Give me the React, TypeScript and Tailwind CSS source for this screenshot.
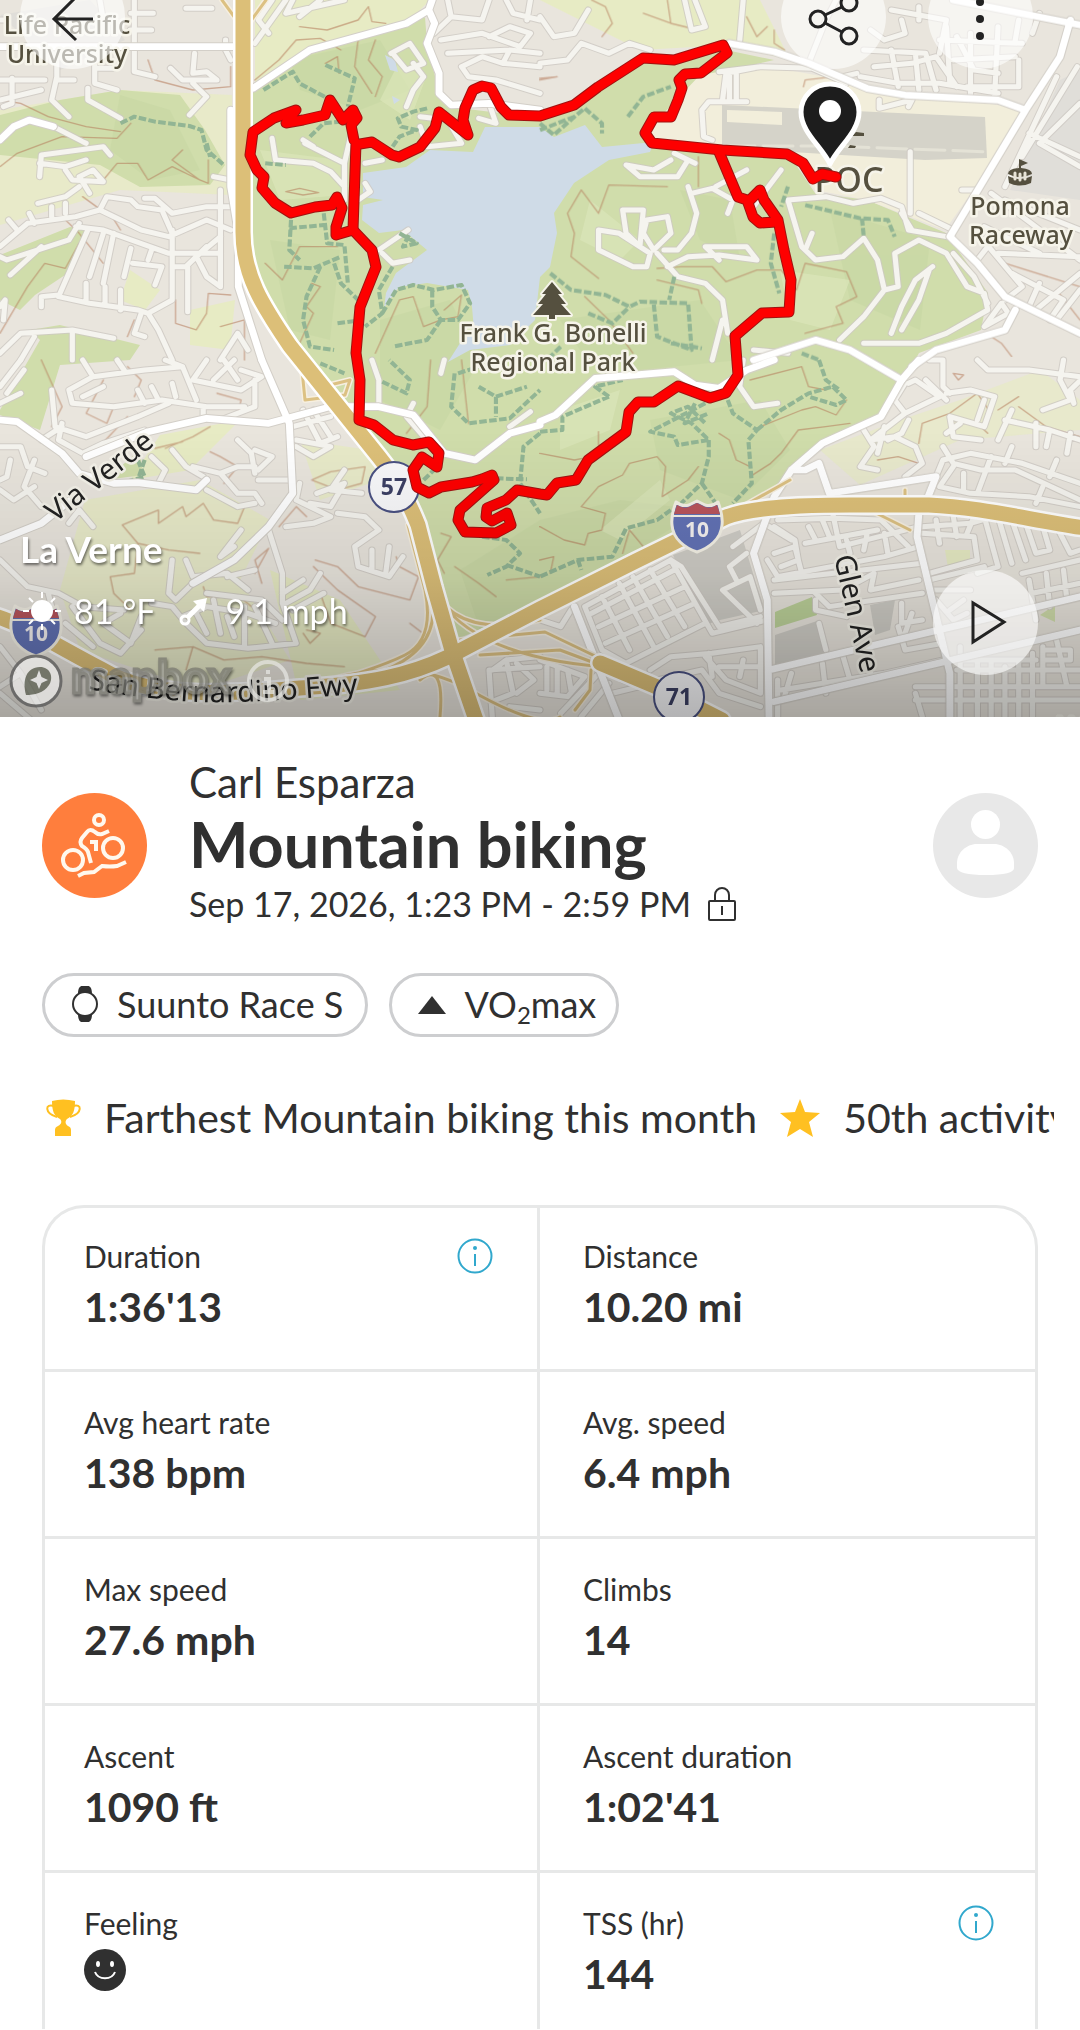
import type { ReactNode } from 'react'

const ROUTE =
  'M836 177L822 174L813 179L803 163L787 154L722 150L652 143L645 133L654 117L671 117L678 100L682 88L679 80L685 74L701 73L727 53L723 45L674 60L643 58L598 87L574 105L540 116L509 115L501 107L491 88L482 86L473 90L465 108L463 120L468 135L439 112L435 128L420 147L399 157L392 155L372 142L360 144'
const ROUTE_WEST =
  'M356 143L353 230L336 235L336 227L342 208L337 197L332 205L315 207L291 213L275 203L262 188L264 177L257 170L250 155L253 132L274 118L296 110L286 123L303 120L325 115L330 100L343 120L353 110L357 118L351 125L354 140'
const ROUTE_SOUTH =
  'M353 230L372 250L376 267L360 307L356 353L360 380L359 420L374 425L393 440L413 445L429 442L439 453L437 467L422 457L413 470L417 487L429 493L441 487L472 482L482 479L492 475L494 480L460 510L458 520L465 532L496 533L511 525L507 513L492 521L486 517L487 508L506 500L517 490L540 494L547 495L557 483L576 480L588 460L626 432L629 412L638 402L654 402L678 386L710 398L726 393L738 375L735 336L762 313L789 312L791 280L784 250L778 220L764 200L760 190L748 202'
const ROUTE_EAST = 'M719 152L738 197L747 200L753 217L760 223L776 222'

// Street data is stored per quadrant, each on its own 1568x1080 grid
const STREETS = {
  nw: 'M540 25H615M380 40H445M378 90H440M390 0V215L450 230M0 60H20M290 0L300 60M165 160V230L150 300L200 350M275 150V250L340 270M0 240H130M165 240H215M275 205H330M35 235V310L10 320M120 270L0 300M255 265V300L350 355M495 205L530 240L630 240L600 215L560 220L565 160M560 250L600 290L550 345M655 120V150L670 180M740 130L830 0M780 100L750 60L790 0M850 0L830 40L1000 0M870 50L930 0M115 530L120 465L300 440L320 465M115 490L190 500L250 480M190 510L210 540L300 545L270 510L230 530L260 580M250 430L240 425L155 380M230 560L190 590L110 610M0 740L80 670L220 650L290 630L410 690L490 710L600 660L670 690M290 630L310 590L380 600L400 620L470 630L500 700M420 595H450L500 640L600 620H670M640 570V860L600 830L570 770L640 710M150 620V650M190 610V640M85 640L100 670M25 660L50 690M0 770L20 780L200 720L230 670M30 825L120 740M220 680L300 690L490 760H640M255 690L170 890L260 910L400 930L430 940L500 900V690M300 700L260 830M330 700L300 850M380 745L360 830M385 790L470 800L450 855M430 780L440 750M500 800H540L600 740M545 800V935M250 850V900M305 860V910M350 870V930M120 920V890L170 885M410 940L390 1000L420 1010M430 940L460 990L500 1080M0 1060L60 1000L210 990L330 1015M210 990V1080M100 1010L60 1080M0 920L15 900L10 960M640 1080L690 1000L720 1050M620 530L670 540M790 415L800 480L910 490L960 515L1000 560M885 430L1000 490L1020 400M880 420L910 440M1000 490V600M1040 600L1075 575L1060 550M1060 490L1110 480M1100 750L1185 690M1110 760L1140 790L1190 780M1140 160L1180 210L1230 190L1190 130L1135 160M1180 320L1200 270L1230 230L1200 190M1260 100L1310 50L1400 60L1420 0M1310 50L1300 0M1280 120L1400 100L1510 140L1540 100L1480 80L1420 110M1340 200L1400 170L1460 190L1480 150M1460 190L1568 200M1340 200L1360 230L1440 240L1568 280M1470 0L1490 40L1568 60M1540 0L1530 60M1300 160L1480 150L1568 160M1220 350L1300 360L1340 430L1240 440L1220 380M1420 310L1440 370L1390 355',
  ne: 'M0 50L40 110L100 100L140 30M0 190L80 180L120 130L200 160L260 130L320 150M420 0L440 90L480 80L450 0M590 0L580 120M640 200L540 220L530 300M550 220V300M570 220V300M600 305H490L470 330L475 410L500 420M520 215L640 200L790 205L890 250M880 230L920 220M985 300V325L1080 300L1070 320M1075 455V640M1100 640L1200 690M1225 570H1270M380 480L330 510L250 495L290 530L400 530L430 480M390 460L450 490M430 560L455 640L440 700L400 750L360 750M440 580L500 565L560 600L545 640M510 560L600 510M240 630L300 630L290 740L250 700Z M310 660L370 650L380 700L330 750L300 700ZM170 690L230 700L320 760L310 800L270 800L170 750ZM370 800L430 770L520 765L630 780L600 740H480L520 780M340 760L400 830L480 850L530 900L545 1000M620 620L700 510M720 600L760 740L800 780L880 770L940 715L980 780L1000 870L1040 860L1030 760L1100 720L1180 760L1240 860L1290 880L1300 930L1180 1000L1100 1030L940 1030M720 600L830 590L910 610L990 595L1050 620L1070 690L1180 710M1050 640L1080 690M1140 800L1090 840L1050 920L1020 1000M1130 810L1100 900L1050 990M870 1020L940 950L1000 870M1200 760L1260 830L1300 910M790 700L770 750M860 0L830 60L780 190M1050 60L1060 100L1000 120L960 90M940 150L1120 160L1150 270M970 200L1080 190L1150 170L1210 260M930 230L1040 250H1160L1330 280M1020 150L1040 260M1090 160L1100 270M1180 80L1190 250M1210 110L1260 210L1330 220M1250 100V290M1330 80L1320 290M1160 120L1400 130M1200 180L1380 170M1240 260H1390V180M1020 30L1180 60L1160 160M1100 20V60M1430 100L1450 40M1390 60L1380 120M1560 200L1400 470M1500 230L1350 560M1568 310L1450 430L1568 500M1420 400L1568 470M1350 600L1568 690M1310 580L1568 780M1290 680L1450 760M1270 700L1400 860M1330 760L1568 770M1370 820L1520 900L1480 960M1400 860L1350 900M1450 850L1420 920M1300 740L1270 780M1500 960L1568 870M1440 930L1568 820M500 1080L530 960M620 1050L720 1060M1290 980L1340 910L1360 940Z',
  sw: 'M60 0L0 80M70 30L20 100M0 130L60 100M240 0L270 50L200 90L210 130L330 140L470 120L600 140H710M270 50L420 30L530 20L570 120M340 0L360 30M440 80L460 120M400 90L420 130M500 70L510 110M480 0L530 20M600 0L560 60L700 90L760 50L700 30M650 0L690 60M740 60V140L640 180M150 90L160 200L250 230L400 170L490 130M180 190L170 240L240 280L300 250L420 210M300 80L240 110M620 60L680 0M590 140L590 175M0 260H60L80 320L130 340M30 300L20 350L0 360M0 390L40 420L100 380M100 300L70 380L120 440M180 200L120 240M270 500L230 450L200 490M440 290L480 330L460 370M500 270L540 320L590 350M560 320L640 340L690 400H740L760 430M690 240L730 280L740 340M640 340L690 320H740M750 360H840M600 390L690 440L740 430M740 270L790 290L750 330M850 200L960 170M880 150L930 250L980 230M910 150L960 230M860 240L960 260L910 290L860 260M870 370L860 420L960 470L910 490L830 500M920 400L1000 370L960 440L900 430M1000 330L960 390L1050 400M980 460L1060 470L1100 510L1030 560L1040 620L1130 650L1170 590M1080 570V630M1130 560L1120 640M780 510L820 640V730L860 850L720 865L600 850L540 790L500 740L440 730M820 700L880 660M830 730L900 690L930 640M850 750L940 700M560 670L510 720L490 700L500 600M540 600L560 650L660 640L720 690M680 560L640 590L700 510M660 650L740 630M570 760L600 820M620 720L640 820M660 770L680 830M710 740V860M740 740L790 850M600 700L760 720L820 780M530 770L600 740L720 760L800 790M0 600L80 680L170 700L240 740L360 750M140 700L150 740M350 760L300 790L380 850L410 770M190 790L270 860M210 740L290 850L350 880L410 810M0 860L60 940L0 980M60 940L120 1050M0 1000L90 1080M1080 0L1100 60V130M1290 0L1280 40M1200 130L1180 170L1230 230M1480 200L1540 155M1470 900L1568 890M1430 930L1470 900L1490 1000L1440 1020M1500 910L1550 960L1500 1000M1430 1080L1420 930L1568 920M1480 1040L1568 1050',
  se: 'M590 0L580 80L620 140L690 130M1130 0H1170V80L1190 100M1270 0L1300 30L1420 30L1568 50M1520 0L1510 60L1540 120L1460 150M1570 60L1540 90L1550 130M1070 70L1090 60L1160 110L1060 160L960 240M1060 160L1030 120L1060 70M1120 60L1180 120M940 210L970 260L930 320L980 330M960 240L1030 230L1090 260L1110 310L1060 350M1000 200L980 280M1070 180L1050 220L1010 240M1180 100L1250 90L1320 110L1290 200L1190 170L1200 230L1280 240M1290 120L1270 180M1220 190L1180 220M1330 240L1370 150M1350 180L1480 210L1568 240M1440 190V260M1480 210L1470 260M1540 220L1530 280M1170 260L1200 310L1280 330H1380L1568 420M1150 350L1170 300L1250 280L1400 310L1568 370M1200 320L1160 380L1250 400L1420 410L1568 440M1310 290L1270 400M1370 260L1350 310M1230 340V390M1500 300L1480 350M1460 380L1440 430M850 460L870 560M690 480L850 475L990 480L1070 560M680 500L740 540L750 600L700 620M770 550L980 510M780 500L800 540M820 480L840 530M870 560L1100 500M660 600L690 650L1000 590L1100 560M760 640L740 560L680 580M680 660L1110 610M680 700L880 690L970 640L960 690L1100 660M800 700L840 740L1110 700M800 720V750L890 770M810 790L830 870M890 540L900 580M950 520L940 570M1000 520L1010 580M1110 500L1250 490L1350 460M1110 520L1260 530L1270 600L1130 640M1150 480L1160 550M1200 470L1210 530M1260 470L1240 520M1290 470L1330 620L1270 640M1330 470L1370 610M1370 480L1410 600M1410 490L1440 580L1480 570L1460 500M1500 500L1540 580L1568 570M1130 660L1290 620M1130 690H1250M1150 720L1200 780L1240 760M1190 750L1230 720M1400 640L1568 600M1420 660L1440 780M1470 640L1480 740M1520 630L1530 720M1430 700L1568 670M1050 730V790L1110 780M1040 800L1060 870L1170 850M1080 760L1060 820M690 960V1070M700 990L1000 940L1170 900M730 940L710 1010M820 910L830 1000M880 890L900 960M950 880L960 950M1090 980H1568M1090 1020H1568M1220 860V1070M1270 900V1070M1310 910V1070M1350 920V1070M1390 900V1070M1430 880V1070M1460 860V980M1500 840L1530 980M1210 930H1568M1230 900H1440M1470 870H1540V900H1470M1090 1000L1110 1070M130 740L380 600L500 820L660 780M130 740L180 870L250 910L480 790M150 760L390 630M170 800L420 680M190 850L450 730M180 710L260 870M230 670L330 860M270 650L370 830M320 630L420 800M380 600L410 620L520 800L640 770M320 930L380 890L500 880L640 860V1000L540 960L480 890M340 960L470 930L520 1000L640 1040M520 920L640 920M590 900L580 950M490 880L500 950M630 790L530 690L610 650L640 750M600 580L550 620L570 660M0 780L60 800L90 750M0 900L130 950L80 1010L0 1000M20 920V990M50 920V1000M80 930L90 990M240 960L290 980L210 1000M180 930L60 1060M200 970L120 1070M560 560L650 490L730 540',
}

const MAIN_ROADS = {
  nw: 'M0 140H680M735 265L900 150L1180 70L1245 30L1255 0M1245 30L1262 70L1240 130L1275 220V280L1310 315L1420 310L1568 330M0 420L40 380L85 360L155 380M670 330V560L692 700V860L760 1080',
  ne: 'M550 130L680 155L780 190L950 265L1060 285L1330 300L1410 330M1200 0L1568 75M1540 60L1510 170L1410 330L1190 710L1270 790L1350 890L1568 1000M1380 930L1350 990L1150 1050L1080 1100M620 1080L800 1020L900 1050L1050 1140',
  sw: 'M760 0L840 190L850 400L780 500L680 600L560 670M0 180L50 185L180 280L230 340L330 370L400 368L570 390L600 360M250 290L430 215L600 175L780 190L960 140L1100 140L1200 165L1290 280L1380 300L1480 220L1568 195M0 540L120 490L230 400',
  se: 'M0 185L45 165L160 55L390 35L450 75L520 85L600 30L680 0M1100 0L1050 60L990 170L820 250L730 330L680 410L620 580L660 720L665 1080M730 330L770 330L810 310L840 400L1150 350L1125 415M1100 460L1095 530L1190 940V1080M665 930L1568 710M680 1025L1568 810M100 740L230 1080',
}

const TRAILS = {
  nw: 'M350 370L390 350L450 365L550 378L585 390L600 450L650 495M600 430L610 470M765 270L850 215L870 250L960 300M945 195L1030 235L1010 320M900 410L940 370L990 365M770 490L830 495M1240 325L1200 335L1155 355L1165 380L1210 390L1160 410L1140 440M845 660L840 750L870 780M840 685L940 675M940 640L950 730L1000 735L1010 850M825 800L910 805L990 770M970 790L990 850L1040 900M930 800L890 890L880 960L900 1040L970 1050M1160 700L1210 730L1170 740L1190 700M1140 800L1100 870L1110 940L1060 980M1110 940L1150 870L1200 855L1260 870L1340 855L1365 910L1330 960L1280 960L1255 920V870M1280 960L1240 1020L1140 1040M980 970L1050 960',
  ne: 'M255 350L300 290L380 260M0 370L40 405L100 350L130 325L180 370V400M0 390L100 350M720 560L700 620M770 615L930 655L1010 660L1030 710M935 655L940 710M680 700L670 790L695 880M30 820L90 870L190 885L260 920L290 905L430 910L440 1050L340 1010L330 910M390 830L375 900M140 940L210 970L260 920M380 1030L470 1045M760 1060L810 1080M60 1040L20 1080',
  sw: 'M930 10L1000 40M1110 65L1180 100L1190 60L1130 0M1320 40L1310 140L1360 190L1480 175L1568 90M1330 40L1390 20M1390 80L1440 110L1530 80M1440 110V170M1568 220L1520 260L1510 370L1568 460M1440 355L1530 358M1400 530L1470 540L1510 580L1470 620L1415 645M1470 615L1568 650M1230 360L1260 330M420 300L400 360M400 300L420 350L350 370',
  se: 'M0 215L65 210V170L200 110M200 110L160 80L240 60M480 130L320 215L390 230L400 255L490 240L440 190L380 160L430 140L480 190M490 240V290L470 370L410 430M470 370L510 430M545 120L560 160L630 210L605 240L615 370L560 430M630 210L700 150L780 100L850 80L890 120L860 135L780 110M810 0L830 60L870 90M380 450L340 480L250 505L210 590L110 600L0 650M110 600L120 630M450 130L420 190L490 160',
}

const CONTOURS = {
  nw: 'M430 180L450 240L560 270L670 260M670 200V260M0 300L60 310L140 350L250 380L350 395M0 500L50 460L180 410L340 415L380 370M300 540L340 490L400 490L430 540L500 500L580 540L605 550V480M530 450L500 480L580 540M240 590L280 620L320 640L350 690M0 1000L80 860L130 790L190 805L230 730M740 240L810 180L860 120L930 115L990 150M870 80L950 90L1040 60L1070 20L1080 65L1120 70M1040 120L1030 200L1080 280M1090 120L1070 180L1110 230L1090 290M945 190L980 170L985 220M830 575L870 565L925 578L880 585ZM1290 930L1340 885L1330 950L1280 960L1230 980L1200 890L1160 900L1090 1060M770 790L820 840L870 740H980M905 850L930 860L890 920L910 940L870 1030M510 900V970L570 990L600 940L605 880L670 885M370 1010L390 960M640 980L710 960V1080M180 650L230 700L300 790',
  ne: 'M0 235L50 230L0 240M300 40L380 70L440 85M370 0L380 70M150 0L190 20L210 70L180 110M600 50L630 110L660 80M680 90V130L710 150M340 805L410 800L500 800L540 845L630 810L700 810L745 870L770 790L890 815L920 890L860 920L880 970L770 1000M170 640L120 570L80 640L100 700L90 770L170 835M170 640L200 555L370 560M460 470V560M130 890L200 960L270 1060M470 910L460 870L340 840M1350 790L1568 860M1310 1010L1340 1030L1370 1070M1500 870L1568 960M765 260L770 240L850 230',
  sw: 'M300 60L250 160L310 190L330 140M370 20L410 60L390 110M120 0L180 140L150 200M630 100L700 120L690 160M480 265L560 230L610 200M450 265L530 245M270 280L370 170M355 495L460 450L460 490L530 440L540 470L590 430L620 480L690 490L710 440M355 495L400 550L490 570L580 580M400 550L390 640L320 650L330 700L380 750M905 360L960 335L1060 320L1050 370L980 390ZM610 275L640 290L690 320L650 370M810 500L860 440L890 470M740 640L780 565L740 600L760 670M915 600L980 620L1040 680L1190 720L1215 650L1160 620L1150 590M910 620L980 690L1090 770L1060 830L960 790L930 700M880 820L900 850L930 820L890 810M590 680L600 710L690 705L730 740M450 870L560 860L650 900L760 890L890 910L1000 920M560 860L540 930M1250 0L1240 140L1180 220M1340 0L1360 190M1320 620L1390 670L1440 710M1470 660L1568 650M1280 520L1310 530L1270 600L1290 640M1190 790L1240 830',
  se: 'M0 280L100 300L150 290M120 440L190 460L180 510L140 520L130 555L70 540L0 500M120 440L170 380L240 345L260 310L340 290L365 320L355 410L430 360L460 320M520 220L550 240L570 300L610 320M610 350L670 310L700 280L750 210L830 200L900 190M640 200L760 150L800 140L860 165L890 120M610 60L760 20L780 80L830 90M170 215V255L210 260M0 600L40 590L30 640M1310 160L1270 100L1190 160L1110 190L1100 250M980 300L1040 290L1100 310M1330 150L1390 110M1390 140L1470 200L1568 230M1200 40L1230 45L1215 60ZM1280 200L1300 220M240 580L260 510L300 560',
}

const RAMPS =
  'M222 0L238 22M266 0L250 22M408 525L425 590Q435 640 405 655T300 690M414 530L432 600Q440 650 380 672M430 580Q450 640 540 620M440 600Q480 660 620 668M460 640L545 632L620 668M480 655L560 650L640 680M300 690Q400 650 470 690T560 717M440 717Q445 660 420 680M302 370L305 400L345 395L350 380L330 385L325 400M740 508L790 480M870 510L910 530M905 490V505M591 670L590 690L575 710'

type Quadrants = Record<'nw' | 'ne' | 'sw' | 'se', string>

function Quads({ paths }: { paths: Quadrants }) {
  return (
    <>
      <path d={paths.nw} transform="scale(.3444 .3333)" />
      <path d={paths.ne} transform="translate(540 0) scale(.3444 .3333)" />
      <path d={paths.sw} transform="translate(0 360) scale(.3444 .3333)" />
      <path d={paths.se} transform="translate(540 360) scale(.3444 .3333)" />
    </>
  )
}

function Highways() {
  return (
    <>
      <path d="M243 -5V232C243 275 262 305 290 346L379 457C400 483 410 505 418 525L434 587L451 647L476 720" />
      <path d="M-5 616C25 625 55 645 103 670C150 698 220 695 300 688C370 684 410 675 448 657L540 609L636 561L726 517C750 508 790 505 850 505H929C980 507 1030 520 1085 528" />
      <path d="M600 663L657 687L722 720" />
    </>
  )
}

function Interstate({ x, y }: { x: number; y: number }) {
  return (
    <g transform={`translate(${x} ${y})`}>
      <path
        d="M-21 -25Q-15 -20 -8 -22L0 -26L8 -22Q15 -20 21 -25C24 -17 26 -10 25 -2C24 12 12 21 0 25C-12 21 -24 12 -25 -2C-26 -10 -24 -17 -21 -25Z"
        fill="#6272b5"
        stroke="#f4f1e6"
        strokeWidth="3"
      />
      <path d="M-20 -22Q-14 -18 -8 -20L0 -24L8 -20Q14 -18 20 -22L23 -13H-23Z" fill="#b9555c" />
      <path d="M-24 -11H24" stroke="#f4f1e6" strokeWidth="2" />
      <text y="10" textAnchor="middle" fontSize="21" fontWeight="700" fill="#f4f1f0">10</text>
    </g>
  )
}

function RouteShield({ x, y, label }: { x: number; y: number; label: string }) {
  return (
    <g transform={`translate(${x} ${y})`}>
      <circle r="25" fill="#f8f8fa" stroke="#4a5182" strokeWidth="2" />
      <text y="8" textAnchor="middle" fontSize="23" fontWeight="700" fill="#3c4064">{label}</text>
    </g>
  )
}

function TrackMap() {
  return (
    <svg viewBox="0 0 1080 717" className="block w-full" role="img" aria-label="Activity route map" strokeLinejoin="round" strokeLinecap="round">
      <defs>
        <linearGradient id="shade" x1="0" y1="0" x2="0" y2="1">
          <stop offset=".6" stopColor="#000" stopOpacity="0" />
          <stop offset=".8" stopColor="#000" stopOpacity=".08" />
          <stop offset="1" stopColor="#000" stopOpacity=".28" />
        </linearGradient>
        <path id="freeway-label" d="M88 689Q150 700 200 702T380 692" />
      </defs>
      <rect width="1080" height="717" fill="#e9e5dd" />

      {/* hills */}
      <g fill="#e7ebc4">
        <path d="M255 0H430L400 30L310 50L255 85Z" />
        <path d="M0 110L120 90L232 95V195L120 190L0 225Z" opacity=".8" />
        <path d="M540 0H760L790 60L730 45L640 50L600 30Z" />
        <path d="M190 310L235 300L230 350L190 345ZM130 270L160 290L145 310L120 300Z" />
        <path d="M85 500L200 480L270 520L240 580L290 660L200 690L80 650L60 590Z" opacity=".8" />
        <path d="M300 440L370 450L380 480L320 500Z" opacity=".8" />
        <path d="M160 435L240 420L190 470L130 480Z" />
        <path d="M820 450L900 420L960 400L1040 370L1080 400V430L960 440L860 485Z" opacity=".7" />
        <path d="M945 550H970V565L948 568ZM270 570L340 600L400 690L300 700Z" />
      </g>
      <g fill="#d0ddab">
        <path d="M0 115L60 100L120 90L180 95L205 130L225 165L210 185L140 187L100 165L0 155Z" />
        <path d="M0 255L70 227L90 230L65 275L35 295L20 310L0 300ZM0 410L40 340L30 330L60 325L140 345L130 360L60 365L40 430L0 415Z" />
        <path d="M105 480L140 450L143 475ZM1040 615L1055 605V622Z" />
        <path d="M253 88L310 50L406 25L425 17L427 43L439 93L451 107L540 118L643 63L726 50L774 60L702 77L690 100L655 140L788 153L815 193L867 200L946 233L988 293L981 330L919 353L902 383L881 417L822 443L791 470L774 493L726 510L640 553L545 602L455 640L434 560L413 500L365 427L303 360L255 280L250 200Z" />
      </g>
      <g fill="#c3d5a0" opacity=".4">
        <path d="M290 60L380 40L410 90L360 110L300 90ZM120 95L170 110L200 170L150 180L110 150Z" />
        <path d="M460 570L540 520L620 500L700 510L560 600L480 630ZM650 420L760 400L790 450L740 500L660 470Z" />
        <path d="M270 240L340 250L330 340L290 330ZM680 190L730 200L740 260L700 240ZM830 210L930 240L920 330L850 300Z" />
        <path d="M380 320L450 300L480 360L440 430L380 400ZM560 320L700 300L740 360L640 370L580 350Z" />
      </g>
      <g fill="#dde7bc" opacity=".6">
        <path d="M260 150L340 160L345 195L280 200ZM400 60L425 80L410 120L380 100ZM560 410L620 390L610 430L560 450Z" />
        <path d="M780 270L850 280L830 330L790 320ZM590 200L640 240L620 260L580 240ZM600 530L660 480L670 500L620 540Z" />
      </g>

      {/* airport */}
      <path d="M645 133L700 75L760 65L870 85L1030 110L945 230L867 200L815 190L790 155L655 142Z" fill="#f2eedb" />
      <path d="M722 105L985 117L987 158L925 160L722 148Z" fill="#d5d3c9" />
      <path d="M727 110L782 112V125L727 122Z" fill="#f2eedb" />
      <path d="M725 146H830L990 152" stroke="#e4e2d6" strokeWidth="3" strokeDasharray="30 8" fill="none" />

      {/* lake */}
      <path
        d="M363 173L406 167L430 150L473 152L485 127L540 127L554 137L585 125L602 147L654 142L650 152L609 160L574 183L554 213L557 233L550 267L540 277L535 320L510 345L470 350L448 362L462 340L474 330L472 307L468 290L427 283L399 287L384 308L386 293L396 273L427 250L403 230L379 233L362 220L363 205L383 200L363 197Z"
        fill="#cfdbe7"
      />
      <path d="M385 55L395 60L398 72L390 70ZM392 96L400 100L394 104Z" fill="#cfdbe7" />

      {/* parking lots and yards */}
      <g fill="#cfcdc6">
        <path d="M673 555L740 530L755 580L765 610L720 620L705 625Z" />
        <path d="M775 635L820 620L828 655L775 668ZM870 605L895 600L890 630L875 635Z" />
      </g>
      <path d="M775 612L812 597L817 615L775 628Z" fill="#bdd29a" />
      <path d="M0 15L90 0L125 40L60 70ZM1060 80L1080 70V200L1010 190Z" fill="#e0ded9" />

      <g fill="none" stroke="#b57a5a" strokeWidth="4" opacity=".55"><Quads paths={CONTOURS} /></g>
      <g fill="none" stroke="#cdc9c3" strokeWidth="21" opacity=".8"><Quads paths={STREETS} /></g>
      <g fill="none" stroke="#f5f4ef" strokeWidth="15"><Quads paths={STREETS} /></g>
      <g fill="none" stroke="#92b594" strokeWidth="12" strokeDasharray="22 7" strokeLinecap="butt"><Quads paths={TRAILS} /></g>
      <g fill="none" stroke="#d3cfc8" strokeWidth="26"><Quads paths={MAIN_ROADS} /></g>
      <g fill="none" stroke="#fff" strokeWidth="20"><Quads paths={MAIN_ROADS} /></g>

      <path d={RAMPS} fill="none" stroke="#f6efe0" strokeWidth="6" />
      <path d={RAMPS} fill="none" stroke="#dcc183" strokeWidth="3" />
      <g fill="none" stroke="#fff" strokeWidth="20"><Highways /></g>
      <g fill="none" stroke="#dcbf78" strokeWidth="15"><Highways /></g>

      <g fontFamily="'Noto Sans', 'Open Sans', sans-serif" fontWeight="500">
        <Interstate x={697} y={527} />
        <Interstate x={36} y={631} />
        <RouteShield x={394} y={487} label="57" />
        <RouteShield x={679} y={697} label="71" />
        <g fill="#55503f" stroke="#f6f4ea" strokeWidth="5" paintOrder="stroke" fontSize="25">
          <text x="67" y="34" textAnchor="middle">Life Pacific</text>
          <text x="67" y="63" textAnchor="middle">University</text>
          <text x="553" y="342" textAnchor="middle">Frank G. Bonelli</text>
          <text x="553" y="371" textAnchor="middle">Regional Park</text>
          <text x="1020" y="215" textAnchor="middle">Pomona</text>
          <text x="1021" y="244" textAnchor="middle">Raceway</text>
          <text x="849" y="192" textAnchor="middle" fontSize="34">POC</text>
        </g>
        <g fill="#222" stroke="#f3f1e8" strokeWidth="5" paintOrder="stroke" fontSize="29" fontWeight="400">
          <text transform="translate(55 523) rotate(-38)">Via Verde</text>
          <text transform="translate(834 557) rotate(77)">Glen Ave</text>
          <text><textPath href="#freeway-label">San Bernardino Fwy</textPath></text>
          <text x="1058" y="738">W</text>
        </g>
      </g>

      {/* park, raceway and airport symbols */}
      <path d="M552 282L562 294H558L566 304H561L571 315H555V319H549V315H533L543 304H538L546 294H542Z" fill="#55503f" stroke="#f6f4ea" strokeWidth="4" paintOrder="stroke" />
      <g fill="#55503f">
        <path d="M1019 159L1028 163L1021 166V168Q1032 169 1032 174Q1020 180 1008 174Q1008 169 1019 168Z" />
        <path d="M1008 176Q1020 182 1032 176L1031 183Q1020 188 1009 183Z" />
        <path d="M856 132L864 133V136H852ZM850 145L856 146L855 148H848Z" />
      </g>
      <path d="M1015 173V179M1020 174V180M1025 173V179" stroke="#e7e3d6" strokeWidth="3" />

      <g fill="none" stroke="#a01210" strokeWidth="11">
        <path d={ROUTE_SOUTH} /><path d={ROUTE_WEST} /><path d={ROUTE_EAST} /><path d={ROUTE} />
      </g>
      <g fill="none" stroke="#fe0000" strokeWidth="9">
        <path d={ROUTE_SOUTH} /><path d={ROUTE_WEST} /><path d={ROUTE_EAST} /><path d={ROUTE} />
      </g>

      <path d="M830 164C822 147 801 132 801 112A29 28 0 0 1 859 112C859 132 838 147 830 164Z" fill="#1d1d1d" stroke="#fff" strokeWidth="5" />
      <circle cx="830" cy="111" r="11" fill="#fff" />
      <rect width="1080" height="717" fill="url(#shade)" />
    </svg>
  )
}

function RoundButton({ label, children }: { label: string; children: ReactNode }) {
  return (
    <button type="button" aria-label={label} className="size-[105px] shrink-0 rounded-full bg-white/60">
      <svg viewBox="0 0 105 105" className="size-full" fill="none" stroke="#222" strokeWidth="3">
        {children}
      </svg>
    </button>
  )
}

function InfoButton({ label }: { label: string }) {
  return (
    <button type="button" aria-label={label} className="size-9 shrink-0">
      <svg viewBox="0 0 36 36" className="size-full" fill="none" stroke="#31a8cd" strokeWidth="2">
        <circle cx="18" cy="18" r="16.5" />
        <path d="M18 16V28" />
        <circle cx="18" cy="10" r="2" fill="#31a8cd" stroke="none" />
      </svg>
    </button>
  )
}

function MapHeader() {
  return (
    <div className="relative overflow-hidden">
      <TrackMap />
      <div className="absolute inset-x-0 -top-9 flex pr-[47px] pl-5">
        <RoundButton label="Back">
          <path d="M73 55H34M56 33L34 55L56 76" />
        </RoundButton>
        <div className="ml-auto flex gap-[42px]">
          <RoundButton label="Share">
            <circle cx="37" cy="55" r="8" />
            <circle cx="68" cy="39" r="8" />
            <circle cx="68" cy="72" r="8" />
            <path d="M44 51L61 43M44 59L61 68" />
          </RoundButton>
          <RoundButton label="More">
            <g fill="#222" stroke="none">
              <circle cx="52" cy="38" r="4" />
              <circle cx="52" cy="55" r="4" />
              <circle cx="52" cy="72" r="4" />
            </g>
          </RoundButton>
        </div>
      </div>
      <div className="absolute right-[42px] bottom-[42px] flex">
        <RoundButton label="Play route">
          <path d="M40 33V72L71 52Z" />
        </RoundButton>
      </div>
      <div className="absolute bottom-2 left-2 text-white [text-shadow:1px_2px_3px_rgba(0,0,0,0.55)]">
        <p className="pl-3 text-[37px] leading-[44px] font-bold">La Verne</p>
        <div className="mt-4 flex items-center pl-3 text-[34px] leading-[48px]">
          <svg viewBox="0 0 44 44" className="size-11" fill="#fff" stroke="#fff" strokeWidth="2">
            <circle cx="22" cy="22" r="10" />
            <path d="M22 3V9M22 35V41M3 22H9M35 22H41M9 9L13 13M31 31L35 35M9 35L13 31M31 13L35 9" />
          </svg>
          <span className="ml-2.5">81 °F</span>
          <svg viewBox="0 0 30 30" className="ml-6 size-[30px]" fill="none" stroke="#fff" strokeWidth="3">
            <circle cx="6" cy="24" r="4" />
            <path d="M9 21L20 10" strokeWidth="5" />
            <path d="M14 5L28 2L25 16Z" fill="#fff" stroke="none" />
          </svg>
          <span className="ml-4">9.1 mph</span>
        </div>
        <div className="mt-[18px] flex items-center opacity-75">
          <svg viewBox="0 0 56 56" className="size-14">
            <circle cx="28" cy="28" r="25" fill="#fff" fillOpacity=".75" stroke="#555" strokeWidth="3" />
            <path d="M18 42C14 28 18 14 32 14C42 14 46 24 41 32C36 40 26 42 18 42Z" fill="#5c6052" />
            <path d="M31 17L33.500 24L40 27L33.500 30L31 36L28.500 30L22 27L28.500 24Z" fill="#eee" />
          </svg>
          <svg viewBox="0 0 172 56" className="ml-1 h-14 w-[172px]">
            <text x="3" y="40" fontSize="45" fontWeight="700" fill="#e6e6e0" fillOpacity=".8" stroke="#77776f" strokeWidth="3">mapbox</text>
          </svg>
          <button type="button" aria-label="Map attribution" className="ml-1.5 size-11">
            <svg viewBox="0 0 44 44" className="size-full" fill="none" stroke="#e4e4e0" strokeWidth="4">
              <circle cx="22" cy="22" r="19" />
              <path d="M18 20H23V33M17 33H28M22 11V15" />
            </svg>
          </button>
        </div>
      </div>
    </div>
  )
}

function ActivitySummary() {
  return (
    <header className="flex items-center px-[42px] pt-[41px]">
      <svg viewBox="0 0 105 105" className="size-[105px] shrink-0" fill="none" stroke="#fff8ee" strokeWidth="4">
        <circle cx="52.500" cy="52.500" r="52.500" fill="#ff7e3d" stroke="none" />
        <circle cx="57" cy="27" r="5" />
        <circle cx="31" cy="67" r="10" />
        <circle cx="71" cy="55" r="10" />
        <path d="M67 38L60 41Q56 42 53 39Q48 35 45 39L40 45Q37 49 40 53Q45 56 46 59L49 70M48 49H54V58M36 83L42 80L52 79L60 73Q68 74 75 73L84 69" />
      </svg>
      <div className="ml-[42px] flex-1 pb-1.5 text-[#303030]">
        <p className="text-[42px] leading-[48px]">Carl Esparza</p>
        <h1 className="text-[63px] leading-[76px] font-bold">Mountain biking</h1>
        <p className="flex items-center gap-4 text-[34px] leading-[44px]">
          Sep 17, 2026, 1:23 PM - 2:59 PM
          <svg viewBox="0 0 30 36" className="h-9 w-[30px]" fill="none" stroke="#303030" strokeWidth="2">
            <rect x="2" y="15" width="26" height="19" rx="1" />
            <path d="M8 15V9A7 7 0 0 1 22 9V15M15 20V29" />
          </svg>
        </p>
      </div>
      <svg viewBox="0 0 105 105" className="size-[105px] shrink-0" fill="#fff" role="img" aria-label="Profile picture">
        <circle cx="52.500" cy="52.500" r="52.500" fill="#e8e8e8" />
        <circle cx="52.500" cy="31.500" r="14.500" />
        <path d="M44 51H61C72 51 81 60 81 70V75Q81 82 53 82T24 75V70C24 60 33 51 44 51Z" />
      </svg>
    </header>
  )
}

function Chips() {
  return (
    <div className="flex gap-[21px] px-[42px] pt-[41px]">
      <button type="button" className="flex h-16 items-center rounded-full border-3 border-[#cdced0] pr-[22px] pb-0.5 pl-[26px] text-[36px]">
        <svg viewBox="0 0 28 38" className="mr-[18px] h-[38px] w-7" fill="none" stroke="#303030" strokeWidth="2">
          <path d="M7 9C7 3 9 1 11 1H17C19 1 21 3 21 9ZM7 29H21C21 35 19 37 17 37H11C9 37 7 35 7 29Z" fill="#303030" stroke="none" />
          <circle cx="14" cy="19" r="12" fill="#fff" />
        </svg>
        Suunto Race S
      </button>
      <button type="button" className="flex h-16 items-center rounded-full border-3 border-[#cdced0] pr-5 pb-0.5 pl-[26px] text-[36px]">
        <svg viewBox="0 0 28 38" className="mr-[18px] h-[38px] w-7" fill="#303030">
          <path d="M14 11L28 29H0Z" />
        </svg>
        <span>VO<sub className="text-[24px]">2</sub>max</span>
      </button>
    </div>
  )
}

function Achievements() {
  return (
    <ul className="mr-[26px] ml-[42px] flex items-center overflow-hidden pt-[52px] pb-[58px] text-[41px] leading-[58px] whitespace-nowrap">
      <li className="flex shrink-0 items-center">
        <svg viewBox="0 0 42 42" className="mr-5 size-[42px]" fill="#ffc021">
          <path d="M10 4Q21 1 33 4C33 14 31 19 25 22C23 24 23 27 26 29Q29 30 29 33V39H13V33Q13 30 16 29C20 27 20 24 18 22C12 19 10 14 10 4Z" />
          <path d="M12 9C3 6 2 16 15 20M31 9C40 6 41 16 28 20" fill="none" stroke="#ffc021" strokeWidth="2" />
        </svg>
        Farthest Mountain biking this month
      </li>
      <li className="ml-[22px] flex shrink-0 items-center">
        <svg viewBox="0 0 42 42" className="mr-[22px] size-[42px]" fill="#ffc021">
          <path d="M21 2L26 15L41 16L30 25L34 40L21 32L8 40L12 25L1 16L16 15Z" />
        </svg>
        50th activity
      </li>
    </ul>
  )
}

function Smile() {
  return (
    <svg viewBox="0 0 42 42" className="size-[42px]" role="img" aria-label="Good">
      <circle cx="21" cy="21" r="21" fill="#303030" />
      <ellipse cx="14" cy="15" rx="2" ry="3" fill="#fff" />
      <ellipse cx="28" cy="15" rx="2" ry="3" fill="#fff" />
      <path d="M11 23A10.500 9 0 0 0 31 23" fill="none" stroke="#fff" strokeWidth="2" />
    </svg>
  )
}

interface Stat {
  label: string
  value: ReactNode
  info?: boolean
}

const stats: Stat[] = [
  { label: 'Duration', value: "1:36'13", info: true },
  { label: 'Distance', value: '10.20 mi' },
  { label: 'Avg heart rate', value: '138 bpm' },
  { label: 'Avg. speed', value: '6.4 mph' },
  { label: 'Max speed', value: '27.6 mph' },
  { label: 'Climbs', value: '14' },
  { label: 'Ascent', value: '1090 ft' },
  { label: 'Ascent duration', value: "1:02'41" },
  { label: 'Feeling', value: <Smile /> },
  { label: 'TSS (hr)', value: '144', info: true },
]

function StatGrid() {
  return (
    <dl className="mx-[42px] grid grid-cols-2 overflow-hidden rounded-t-[42px] border-3 border-b-0 border-[#e7e8e8]">
      {stats.map(({ label, value, info }) => (
        <div key={label} className="flex min-h-[167px] items-start justify-between border-b-3 border-[#e7e8e8] pt-8 pr-11 pl-[39px] odd:border-r-3 even:pr-[41px] even:pl-[43px] nth-[-n+2]:min-h-[164px] nth-[-n+2]:pt-[30px] nth-last-[-n+2]:min-h-[156px] nth-last-[-n+2]:border-b-0">
          <div>
            <dt className="text-[30px] leading-9">{label}</dt>
            <dd className="mt-2 text-[41px] leading-[50px] font-bold">{value}</dd>
          </div>
          {info && <InfoButton label={`About ${label}`} />}
        </div>
      ))}
    </dl>
  )
}

export default function App() {
  return (
    <main className="min-h-screen overflow-hidden bg-white font-[Lato,'Open_Sans',sans-serif] text-[#303030]">
      <MapHeader />
      <ActivitySummary />
      <Chips />
      <Achievements />
      <StatGrid />
    </main>
  )
}
